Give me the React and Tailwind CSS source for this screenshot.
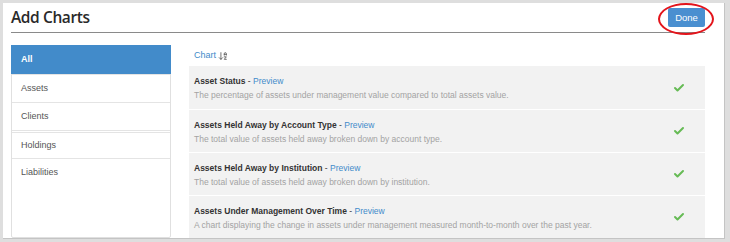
import React from 'react';
import { Check, ArrowDownAZ } from 'lucide-react';

const categories = ['All', 'Assets', 'Clients', 'Holdings', 'Liabilities'];

const charts = [
  {
    name: 'Asset Status',
    desc: 'The percentage of assets under management value compared to total assets value.',
  },
  {
    name: 'Assets Held Away by Account Type',
    desc: 'The total value of assets held away broken down by account type.',
  },
  {
    name: 'Assets Held Away by Institution',
    desc: 'The total value of assets held away broken down by institution.',
  },
  {
    name: 'Assets Under Management Over Time',
    desc: 'A chart displaying the change in assets under management measured month-to-month over the past year.',
  },
];

const App = () => {
  return (
    <div
      className="w-[730px] h-[242px] bg-[#dedede] pt-[3px] pl-[3px] overflow-hidden"
      style={{ fontFamily: '"Liberation Sans", Arial, sans-serif' }}
    >
      <div className="relative w-[722px] h-[236px] bg-white border-r border-b border-[#c4c4c4] overflow-hidden pl-[8px] pr-[19px]">
        {/* Header */}
        <div className="h-[30px] flex items-center justify-between border-b border-[#8a8a8a]">
          <h1 className="text-[15.5px] leading-none text-[#2a2a2a] font-semibold tracking-[-0.4px] pt-[1px] font-['Open_Sans',sans-serif]">
            Add Charts
          </h1>
          <button className="h-[19px] w-[37px] rounded-[2px] bg-[#4a8fd0] text-white text-[9.5px] leading-none">
            Done
          </button>
        </div>

        {/* Red highlight around Done */}
        <div className="absolute left-[655px] top-[0px] w-[56px] h-[32px] rounded-[50%] border-2 border-[#e3141b]" />

        {/* Body */}
        <div className="flex gap-[18px] mt-[12px]">
          {/* Category list */}
          <div className="w-[160px] shrink-0 border border-[#e0e0e0] rounded-[2px]">
            {categories.map((c, i) => (
              <div
                key={c}
                className={
                  i === 0
                    ? 'h-[29px] flex items-center pl-[10px] bg-[#428bca] text-white text-[9px] font-bold -mt-px -mx-px'
                    : i === 3
                    ? 'h-[28px] flex items-center pl-[9px] text-[#555] text-[9px] border-t-[3px] border-double border-[#e4e4e4]'
                    : 'h-[28px] flex items-center pl-[9px] text-[#555] text-[9px] border-t border-[#e4e4e4]'
                }
              >
                {c}
              </div>
            ))}
          </div>

          {/* Chart list */}
          <div className="flex-1">
            <div className="h-[21px] flex items-center pl-[5px] gap-[2px] text-[#428bca] text-[9px]">
              <span>Chart</span>
              <ArrowDownAZ size={10} strokeWidth={2} className="text-[#555]" />
            </div>
            {charts.map((c, i) => (
              <div
                key={c.name}
                className={
                  i === 0
                    ? 'h-[43px] bg-[#f2f2f2] flex items-start justify-between pl-[5px] pr-[20px]'
                    : 'h-[43px] bg-[#f2f2f2] flex items-start justify-between pl-[5px] pr-[20px] border-t border-white'
                }
              >
                <div className="pt-[8px] text-[8.5px] leading-[14px]">
                  <div className="text-[#333]">
                    <span className="font-bold">{c.name}</span>
                    <span> - </span>
                    <span className="text-[#428bca]">Preview</span>
                  </div>
                  <div className="text-[#a3a3a3]">{c.desc}</div>
                </div>
                <div className="self-center">
                  <Check size={12} strokeWidth={4} className="text-[#66bb55]" />
                </div>
              </div>
            ))}
          </div>
        </div>
      </div>
    </div>
  );
};

export default App;
